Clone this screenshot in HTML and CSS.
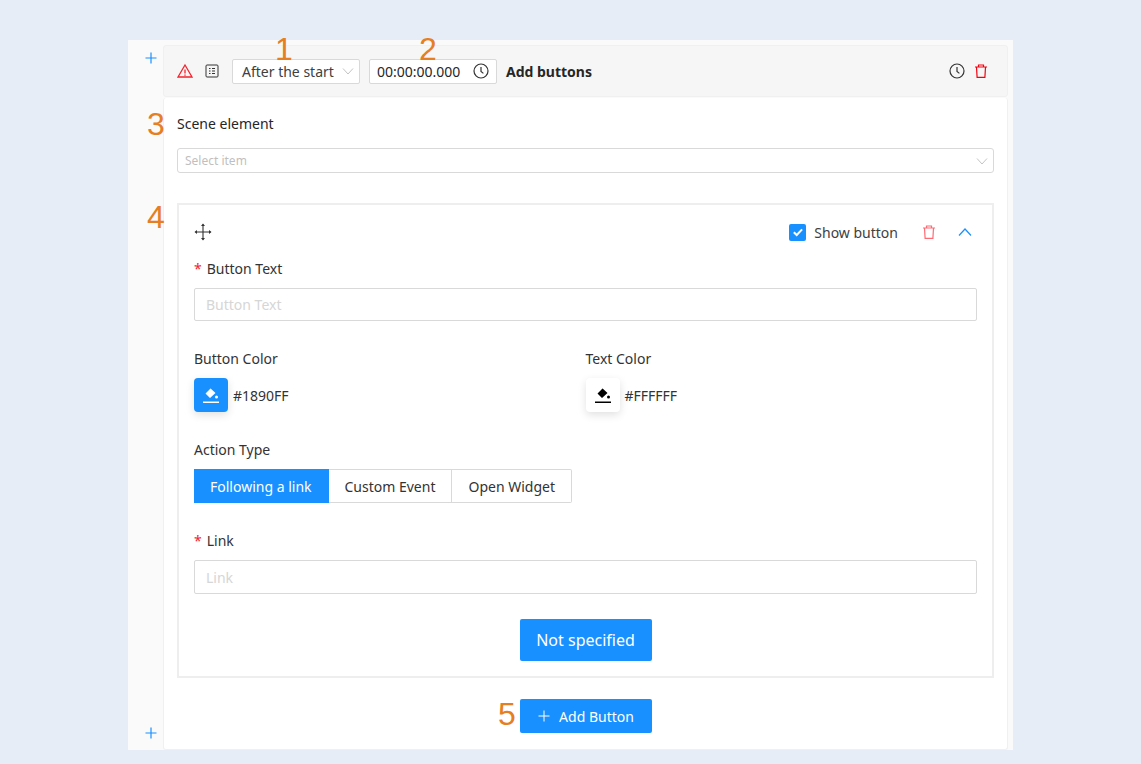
FILE: index.html
```html
<!DOCTYPE html>
<html lang="en">
<head>
    <meta charset="UTF-8">
    <meta name="viewport" content="width=device-width, initial-scale=1.0">
    <title>Add buttons</title>
    <link rel="stylesheet" href="styles.css">
</head>
<body>
    <div class="panel">
        <div class="rail">
            <svg class="rail-plus" width="14" height="14" viewBox="0 0 14 14"><path d="M7 1.5v11M1.5 7h11" /></svg>
            <svg class="rail-plus" width="14" height="14" viewBox="0 0 14 14"><path d="M7 1.5v11M1.5 7h11" /></svg>
        </div>
        <div class="content">
            <div class="step-header">
                <svg class="icon-warning" width="16" height="16" viewBox="0 0 16 16"><path d="M8 2 L15 14 H1 Z" /><path d="M8 6.5v4M8 11.5v1.3" /></svg>
                <svg class="icon-list" width="14" height="14" viewBox="0 0 14 14"><rect x="1" y="1" width="12" height="12" rx="1" /><path d="M4 4.5h1.5M7 4.5h3M4 7h1.5M7 7h3M4 9.5h1.5M7 9.5h3" /></svg>
                <div class="select-small">
                    <span>After the start</span>
                    <svg class="chevron" width="12" height="12" viewBox="0 0 12 12"><path d="M1 3.5 L6 9 L11 3.5" /></svg>
                </div>
                <div class="time-input">
                    <span>00:00:00.000</span>
                    <svg class="icon-clock" width="16" height="16" viewBox="0 0 16 16"><circle cx="8" cy="8" r="7" /><path d="M8 4v4.4l2.4 2" /></svg>
                </div>
                <span class="step-title">Add buttons</span>
                <div class="header-actions">
                    <svg class="icon-clock" width="16" height="16" viewBox="0 0 16 16"><circle cx="8" cy="8" r="7" /><path d="M8 4v4.4l2.4 2" /></svg>
                    <svg class="icon-trash" width="14" height="14" viewBox="0 0 14 14"><path d="M1 3h12M4.5 3V1h5v2M2.5 3l.6 10.300h7.800l.6-10.300" /></svg>
                </div>
            </div>
            <div class="step-body">
                <div class="scene-label">Scene element</div>
                <div class="select-wide">
                    <span>Select item</span>
                    <svg class="chevron" width="12" height="12" viewBox="0 0 12 12"><path d="M1 3.5 L6 9 L11 3.5" /></svg>
                </div>

                <div class="button-card">
                    <div class="card-top">
                        <svg class="icon-move" width="18" height="18" viewBox="0 0 18 18">
                            <path d="M9 1.500v15M1.500 9h15" />
                            <path class="solid" d="M9 0.500l2 2.500H7zM9 17.500l2-2.500H7zM0.500 9L3 7v4zM17.500 9L15 7v4z" />
                        </svg>
                        <div class="card-actions">
                            <span class="checkbox">
                                <svg width="16" height="16" viewBox="0 0 16 16"><path d="M3.800 8.200l2.900 2.800 5.400-5.600" /></svg>
                            </span>
                            <span class="checkbox-label">Show button</span>
                            <svg class="icon-trash light" width="14" height="14" viewBox="0 0 14 14"><path d="M1 3h12M4.500 3V1h5v2M2.500 3l.6 10.300h7.800l.6-10.300" /></svg>
                            <svg class="icon-up" width="14" height="14" viewBox="0 0 14 14"><path d="M1 10.500 L7 4 L13 10.500" /></svg>
                        </div>
                    </div>

                    <label class="field-label"><span class="required">*</span>Button Text</label>
                    <div class="text-input tall-33">Button Text</div>

                    <div class="color-row">
                        <div class="color-col">
                            <label class="field-label">Button Color</label>
                            <div class="color-value">
                                <span class="swatch swatch-blue">
                                    <svg width="16" height="18" viewBox="0 0 16 18"><path d="M6.500 1.500l1 1-5 5 4.500 4.500 5.500-5z" /><circle cx="13.500" cy="11" r="1.500" /><rect x="0" y="15.500" width="16" height="1.500" /></svg>
                                </span>
                                <span>#1890FF</span>
                            </div>
                        </div>
                        <div class="color-col">
                            <label class="field-label">Text Color</label>
                            <div class="color-value">
                                <span class="swatch swatch-white">
                                    <svg width="16" height="18" viewBox="0 0 16 18"><path d="M6.500 1.500l1 1-5 5 4.500 4.500 5.500-5z" /><circle cx="13.500" cy="11" r="1.500" /><rect x="0" y="15.500" width="16" height="1.500" /></svg>
                                </span>
                                <span>#FFFFFF</span>
                            </div>
                        </div>
                    </div>

                    <label class="field-label action-label">Action Type</label>
                    <div class="segments">
                        <span class="segment active">Following a link</span>
                        <span class="segment">Custom Event</span>
                        <span class="segment">Open Widget</span>
                    </div>

                    <label class="field-label link-label"><span class="required">*</span>Link</label>
                    <div class="text-input tall-34">Link</div>

                    <div class="preview-wrap">
                        <span class="btn-primary btn-preview">Not specified</span>
                    </div>
                </div>

                <div class="add-wrap">
                    <span class="btn-primary btn-add">
                        <svg width="14" height="14" viewBox="0 0 14 14"><path d="M7 1.500v11M1.500 7h11" /></svg>
                        Add Button
                    </span>
                </div>
            </div>
        </div>

        <span class="mark mark-1">1</span>
        <span class="mark mark-2">2</span>
        <span class="mark mark-3">3</span>
        <span class="mark mark-4">4</span>
        <span class="mark mark-5">5</span>
    </div>
</body>
</html>
```

FILE: styles.css
```css
* {
    box-sizing: border-box;
}

html, body {
    height: 100%;
}

body {
    margin: 0;
    padding: 40px 128px 14px;
    background: #e6edf7;
    font-family: "Noto Sans", "Open Sans", sans-serif;
    font-size: 14px;
    color: #262626;
    overflow: hidden;
}

svg {
    display: block;
    flex: none;
    fill: none;
}

.panel {
    position: relative;
    display: flex;
    width: 885px;
    height: 710px;
    background: #fafafa;
}

.rail {
    width: 35px;
    padding: 11px 0 10px 16px;
    display: flex;
    flex-direction: column;
    justify-content: space-between;
}

.rail-plus {
    stroke: #1890ff;
    stroke-width: 1.2;
}

.content {
    width: 845px;
    padding-top: 5px;
    display: flex;
    flex-direction: column;
}

.step-header {
    height: 52px;
    display: flex;
    align-items: center;
    padding: 0 19px 0 13px;
    background: #f6f6f6;
    border: 1px solid #f0f0f0;
    border-radius: 3px;
}

.icon-warning {
    stroke: #f5222d;
    stroke-width: 1.300;
    margin-right: 12px;
}

.icon-list {
    stroke: #333;
    margin-right: 13px;
}

.select-small {
    width: 128px;
    height: 25px;
    display: flex;
    align-items: center;
    justify-content: space-between;
    padding: 0 5px 0 9px;
    background: #fff;
    border: 1px solid #d9d9d9;
    border-radius: 2px;
    color: #404040;
    margin-right: 9px;
}

.chevron {
    stroke: #c4c4c4;
}

.time-input {
    width: 128px;
    height: 25px;
    display: flex;
    align-items: center;
    justify-content: space-between;
    padding: 0 7px;
    background: #fff;
    border: 1px solid #d9d9d9;
    border-radius: 2px;
    margin-right: 9px;
}

.icon-clock {
    stroke: #333;
    stroke-width: 1.200;
}

.step-title {
    font-weight: 700;
}

.header-actions {
    margin-left: auto;
    display: flex;
    align-items: center;
    gap: 9px;
}

.icon-trash {
    stroke: #f5000f;
    stroke-width: 1.200;
}

.icon-trash.light {
    stroke: #ff6b75;
}

.step-body {
    flex: 1;
    margin-top: 1px;
    padding: 15px 13px 0;
    background: #fff;
    border: 1px solid #f0f0f0;
    border-top: 0;
    border-radius: 3px;
}

.scene-label {
    line-height: 22px;
    margin-bottom: 13px;
}

.select-wide {
    height: 25px;
    display: flex;
    align-items: center;
    justify-content: space-between;
    padding: 0 5px 0 7px;
    border: 1px solid #d9d9d9;
    border-radius: 3px;
    color: #bfbfbf;
    font-size: 12px;
}

.button-card {
    margin-top: 30px;
    height: 475px;
    padding: 15px;
    border: 2px solid #eeeeee;
}

.card-top {
    height: 24px;
    display: flex;
    align-items: center;
    justify-content: space-between;
}

.card-actions {
    display: flex;
    align-items: center;
}

.icon-move {
    stroke: #333;
    stroke-width: 1.100;
}

.icon-move .solid {
    fill: #333;
    stroke: none;
}

.checkbox {
    width: 17px;
    height: 17px;
    background: #1890ff;
    border-radius: 2px;
    margin-right: 8px;
}

.checkbox svg {
    margin: 0.500px;
    stroke: #fff;
    stroke-width: 2;
}

.checkbox-label {
    color: #404040;
    margin-right: 24px;
}

.icon-up {
    stroke: #1890ff;
    stroke-width: 1.200;
    margin-left: 22px;
    margin-right: 5px;
}

.field-label {
    display: block;
    line-height: 22px;
    color: #333;
}

.card-top + .field-label {
    margin-top: 14px;
}

.required {
    color: #f5222d;
    margin-right: 5px;
}

.text-input {
    margin-top: 8px;
    display: flex;
    align-items: center;
    padding: 0 11px;
    border: 1px solid #d9d9d9;
    border-radius: 2px;
    color: #d6d6d6;
}

.tall-33 {
    height: 33px;
}

.tall-34 {
    height: 34px;
}

.color-row {
    margin-top: 27px;
    display: flex;
}

.color-col {
    width: 400px;
}

.color-value {
    margin-top: 8px;
    display: flex;
    align-items: center;
    gap: 5px;
    color: #333;
}

.swatch {
    width: 34px;
    height: 34px;
    border-radius: 4px;
    display: flex;
    align-items: center;
    justify-content: center;
    box-shadow: 0 3px 8px rgba(0, 0, 0, 0.12);
}

.swatch-blue {
    background: #1890ff;
    fill: #fff;
}

.swatch-blue svg {
    fill: #fff;
}

.swatch-white {
    background: #fff;
}

.swatch-white svg {
    fill: #000;
}

.action-label {
    margin-top: 27px;
}

.segments {
    margin-top: 8px;
    display: flex;
}

.segment {
    height: 34px;
    display: flex;
    align-items: center;
    padding: 0 16px;
    border: 1px solid #d9d9d9;
    border-left: 0;
    color: #333;
}

.segment.active {
    background: #1890ff;
    color: #fff;
    border-color: #1890ff;
}

.segment:last-child {
    border-radius: 0 2px 2px 0;
}

.link-label {
    margin-top: 27px;
}

.preview-wrap {
    margin-top: 25px;
    display: flex;
    justify-content: center;
}

.btn-primary {
    display: flex;
    align-items: center;
    justify-content: center;
    width: 132px;
    background: #1890ff;
    color: #fff;
    border-radius: 2px;
}

.btn-preview {
    height: 42px;
    font-size: 16px;
}

.add-wrap {
    margin-top: 21px;
    display: flex;
    justify-content: center;
}

.btn-add {
    height: 34px;
    gap: 8px;
}

.btn-add svg {
    stroke: #fff;
}

/* orange numbers laid over the screenshot */
.mark {
    position: absolute;
    font-family: "Liberation Sans", sans-serif;
    font-size: 32px;
    line-height: 32px;
    color: #e67e22;
}

.mark-1 { left: 147px; top: -7px; }
.mark-2 { left: 291px; top: -7px; }
.mark-3 { left: 19px; top: 68px; }
.mark-4 { left: 19px; top: 161px; }
.mark-5 { left: 370px; top: 658px; }
```
